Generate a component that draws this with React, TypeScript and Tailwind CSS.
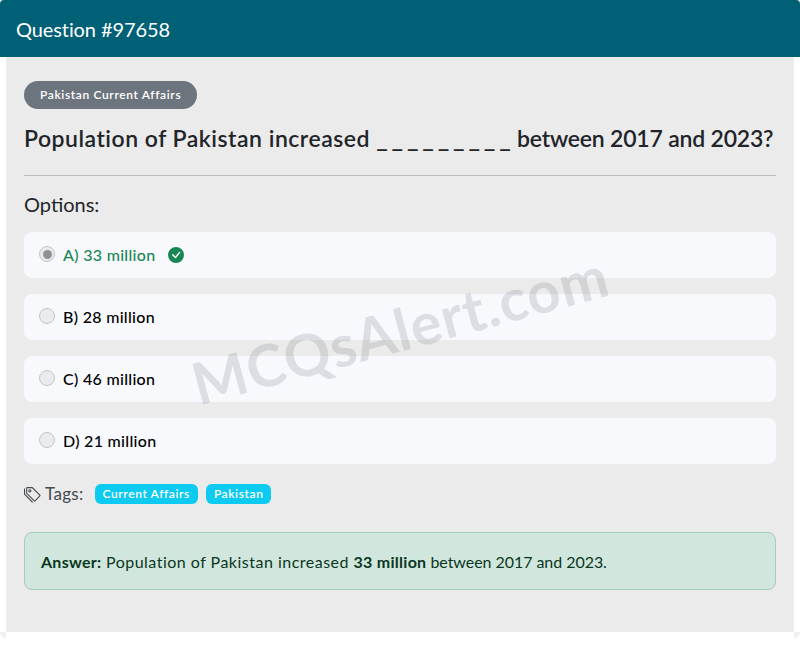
const options = [
  { label: 'A) 33 million', correct: true },
  { label: 'B) 28 million', correct: false },
  { label: 'C) 46 million', correct: false },
  { label: 'D) 21 million', correct: false },
];

const TagsIcon = () => (
  <svg width="17" height="17" viewBox="0 0 16 16" fill="currentColor" className="mr-[4px]">
    <path d="M3 2v4.586l7 7L14.586 9l-7-7H3zM2 2a1 1 0 0 1 1-1h4.586a1 1 0 0 1 .707.293l7 7a1 1 0 0 1 0 1.414l-4.586 4.586a1 1 0 0 1-1.414 0l-7-7A1 1 0 0 1 2 6.586V2z" />
    <path d="M5.5 5a.5.5 0 1 1 0-1 .5.5 0 0 1 0 1zm0 1a1.5 1.5 0 1 0 0-3 1.5 1.5 0 0 0 0 3zM1 7.086a1 1 0 0 0 .293.707L8.75 15.25l-.043.043a1 1 0 0 1-1.414 0l-7-7A1 1 0 0 1 0 7.586V3a1 1 0 0 1 1-1v5.086z" />
  </svg>
);

const CheckIcon = () => (
  <svg width="16" height="16" viewBox="0 0 16 16" fill="#198754" className="ml-[13px]">
    <path d="M16 8A8 8 0 1 1 0 8a8 8 0 0 1 16 0zm-3.97-3.03a.75.75 0 0 0-1.08.022L7.477 9.417 5.384 7.323a.75.75 0 0 0-1.06 1.06L6.97 11.03a.75.75 0 0 0 1.079-.02l3.992-4.99a.75.75 0 0 0-.01-1.05z" />
  </svg>
);

export default function App() {
  return (
    <div className="font-['Lato','Noto_Sans',sans-serif] bg-white h-[663px]">
      <div className="relative w-[800px] h-[638px]">
        <div className="h-[57px] bg-[#006075] rounded-t-[4px] flex items-center px-[16px] text-white text-[20px] tracking-[-0.1px]">
          Question #97658
        </div>
        <div className="mx-[6px] h-[575px] bg-[#ebebeb] px-[18px] pt-[24px]">
          <span className="inline-flex items-center h-[28px] px-[16px] rounded-full bg-[#6c757d] text-white text-[12px] font-semibold tracking-[0.63px]">
            Pakistan Current Affairs
          </span>
          <h1 className="mt-[16px] h-[26px] text-[#212529] text-[23px] leading-[26px] font-semibold whitespace-nowrap">
            <span className="tracking-[0.5px]">Population of Pakistan increased </span>
            <span className="text-[25px] leading-none tracking-[3.8px]">_________</span>
            <span className="-ml-[3px] tracking-[-0.2px]"> between 2017 and 2023?</span>
          </h1>
          <div className="mt-[24px] border-t border-[#bdbdbd]" />
          <div className="mt-[16px] text-[#212529] text-[20px] leading-[24px]">Options:</div>
          <div className="mt-[16px] flex flex-col gap-[16px]">
            {options.map((o) => (
              <div key={o.label} className="h-[46px] rounded-[8px] bg-[#f8f9fd] flex items-center px-[15px]">
                <span className="w-[16px] h-[16px] rounded-full border border-[#c4c5c6] bg-[#e9ecef] flex items-center justify-center mr-[8px] -mt-[2px]">
                  {o.correct && <span className="w-[9px] h-[9px] rounded-full bg-[#8f9193]" />}
                </span>
                <span className={`text-[16px] font-medium tracking-[0.3px] ${o.correct ? 'text-[#198754]' : 'text-black'}`}>{o.label}</span>
                {o.correct && <CheckIcon />}
              </div>
            ))}
          </div>
          <div className="mt-[19px] h-[22px] flex items-center text-[#444a50] text-[17px]">
            <TagsIcon />
            <span className="tracking-[0.3px]">Tags:</span>
            <span className="ml-[11px] h-[20px] px-[8px] rounded-[6px] bg-[#0dcaf0] text-white text-[12px] font-semibold tracking-[0.6px] flex items-center">Current Affairs</span>
            <span className="ml-[8px] h-[20px] px-[8px] rounded-[6px] bg-[#0dcaf0] text-white text-[12px] font-semibold tracking-[0.6px] flex items-center">Pakistan</span>
          </div>
          <div className="mt-[27px] h-[58px] pt-[1px] rounded-[8px] border border-[#a3cfbb] bg-[#d1e7dd] flex items-center px-[16px] text-[#0a3622] text-[16px]">
            <span>
              <b className="tracking-[0.27px]">Answer:</b>
              <span className="tracking-[0.49px]"> Population of Pakistan increased </span>
              <b className="tracking-[0.27px]">33 million</b>
              <span className="tracking-[-0.05px]"> between 2017 and 2023.</span>
            </span>
          </div>
        </div>
        <div className="absolute left-0 bottom-0 w-[6px] h-[6px] rounded-bl-[6px] bg-[#f0f0f0]" />
        <div className="absolute right-0 bottom-0 w-[6px] h-[6px] rounded-br-[6px] bg-[#f0f0f0]" />
        <div className="absolute inset-x-0 top-[300px] text-center -rotate-[15deg] text-[58px] leading-none font-bold text-[#6c757d]/20 tracking-[1px] pointer-events-none select-none whitespace-nowrap">
          MCQsAlert.com
        </div>
      </div>
    </div>
  );
}
